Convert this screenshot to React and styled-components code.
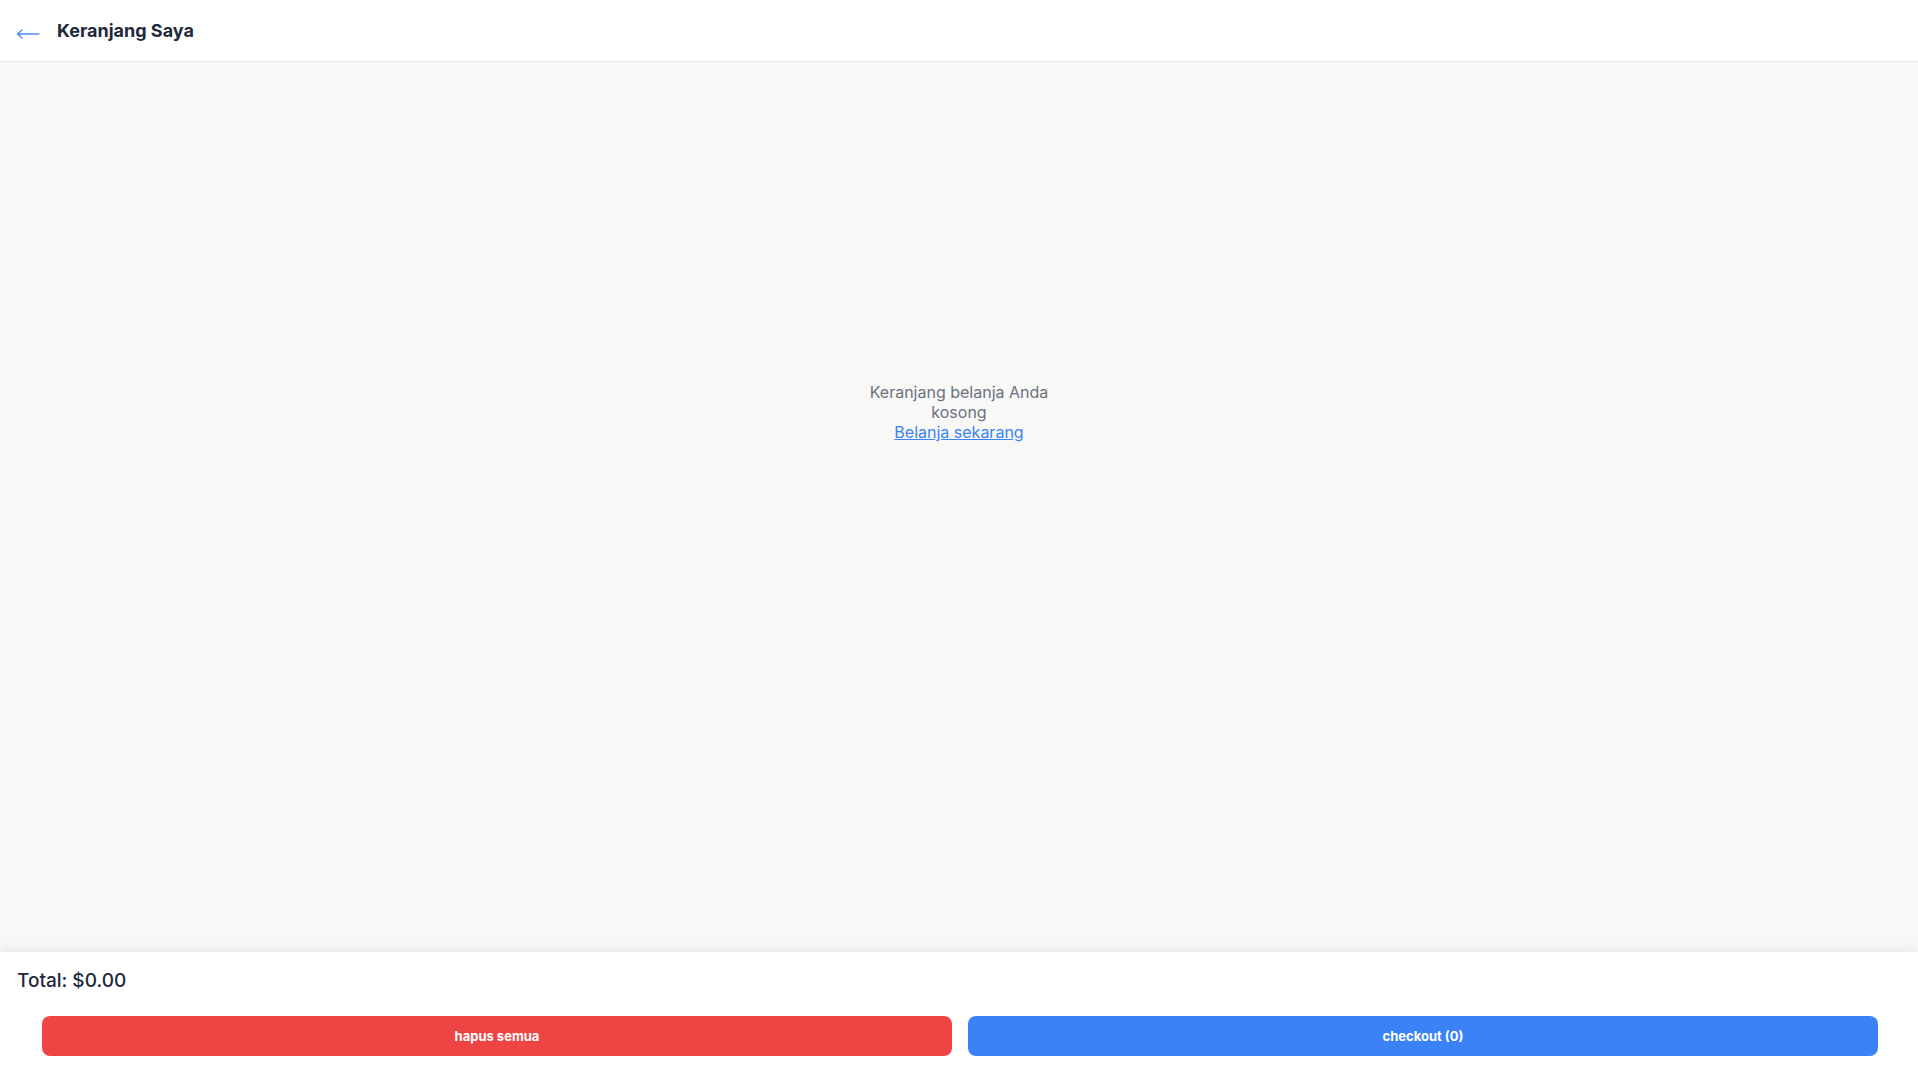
import React from "react";
import styled, { createGlobalStyle } from "styled-components";

const GlobalStyle = createGlobalStyle`
  html, body {
    margin: 0;
    padding: 0;
    font-family: Inter, "Noto Sans", sans-serif;
  }
  * { box-sizing: border-box; }
`;

const Page = styled.div`
  display: flex;
  flex-direction: column;
  min-height: 100vh;
  background: #ffffff;
`;

const Header = styled.header`
  display: flex;
  align-items: center;
  gap: 17px;
  height: 62px;
  padding: 0 16px;
  background: #ffffff;
  border-bottom: 1px solid #e5e7eb;
`;

const BackButton = styled.button`
  border: none;
  background: none;
  padding: 0;
  margin-top: 6px;
  display: flex;
  align-items: center;
  color: #4f8cf7;
  cursor: pointer;
`;

const Title = styled.h1`
  margin: 0;
  font-size: 18px;
  line-height: 28px;
  font-weight: 700;
  color: #1e293b;
`;

const Main = styled.main`
  flex: 1;
  display: flex;
  flex-direction: column;
  align-items: center;
  padding-top: 320px;
  background: #f8f8f7;
`;

const Empty = styled.div`
  max-width: 190px;
  text-align: center;
  font-size: 16px;
  line-height: 20px;
  color: #6b7280;
`;

const ShopLink = styled.a`
  display: block;
  color: #3b82f6;
  text-decoration: underline;
  cursor: pointer;
`;

const Footer = styled.footer`
  display: flex;
  flex-direction: column;
  gap: 21px;
  padding: 15px 40px 22px 17px;
  background: #ffffff;
  box-shadow: 0 -4px 10px rgba(0, 0, 0, 0.06);
  position: relative;
`;

const Total = styled.div`
  font-size: 19px;
  line-height: 28px;
  font-weight: 500;
  color: #1e293b;
`;

const Actions = styled.div`
  display: grid;
  grid-template-columns: 1fr 1fr;
  gap: 16px;
  padding-left: 25px;
`;

const ActionButton = styled.button`
  height: 40px;
  border: none;
  border-radius: 8px;
  background: ${(p) => (p.$danger ? "#ef4444" : "#3b82f6")};
  color: #ffffff;
  font-family: Inter, "Noto Sans", sans-serif;
  font-size: 13px;
  font-weight: 700;
  cursor: pointer;
`;

function ArrowLeft() {
  return (
    <svg width="24" height="12" viewBox="0 0 24 12" fill="none">
      <path
        d="M23 6H2M6 2L1.5 6L6 10"
        stroke="currentColor"
        strokeWidth="1.4"
        strokeLinecap="round"
        strokeLinejoin="round"
      />
    </svg>
  );
}

export default function App() {
  return (
    <>
      <GlobalStyle />
      <Page>
        <Header>
          <BackButton aria-label="Kembali">
            <ArrowLeft />
          </BackButton>
          <Title>Keranjang Saya</Title>
        </Header>
        <Main>
          <Empty>
            Keranjang belanja Anda kosong
            <ShopLink>Belanja sekarang</ShopLink>
          </Empty>
        </Main>
        <Footer>
          <Total>Total: $0.00</Total>
          <Actions>
            <ActionButton $danger>hapus semua</ActionButton>
            <ActionButton>checkout (0)</ActionButton>
          </Actions>
        </Footer>
      </Page>
    </>
  );
}
